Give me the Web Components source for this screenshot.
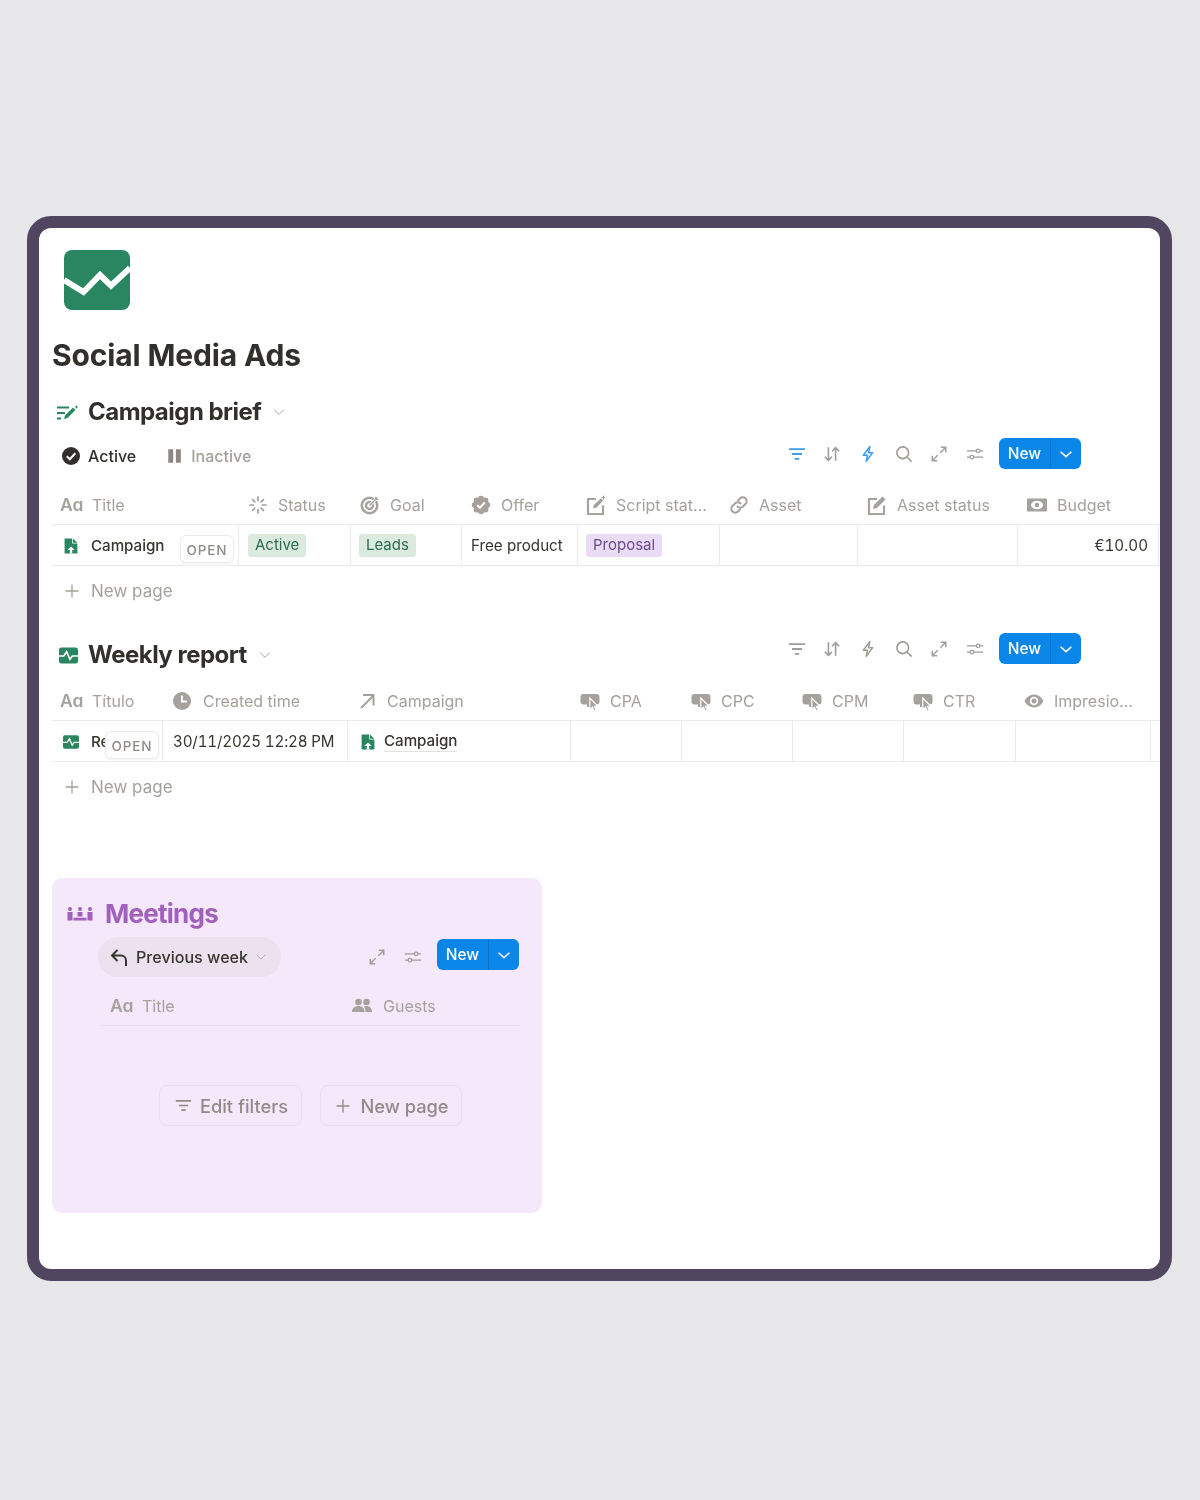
<!DOCTYPE html>
<html lang="en"><head><meta charset="utf-8"><title>Social Media Ads</title>
<style>
html,body{margin:0;padding:0;background:#e7e7e9}
body{font-family:Inter,"Liberation Sans",sans-serif;color:#37352f;-webkit-font-smoothing:antialiased}
.t1{--cols:187px 112px 111px 116px 142px 138px 160px 141px 2px}
.t2{--cols:111px 185px 223px 111px 111px 111px 112px 135px 20px}
.m{--cols:242px 176px}
</style></head><body>
<app-frame>
  <page-head title="Social Media Ads"></page-head>

  <view-title icon="brief" style="--top:23px">Campaign brief</view-title>
  <view-bar tabs bluefilter style="--top:12px"></view-bar>
  <t-row head class="t1" style="margin-top:16px">
    <t-head icon="aa" first>Title</t-head><t-head icon="spinner">Status</t-head><t-head icon="target">Goal</t-head><t-head icon="badge">Offer</t-head><t-head icon="edit" style="--pad:8px">Script stat...</t-head><t-head icon="link">Asset</t-head><t-head icon="edit2">Asset status</t-head><t-head icon="money">Budget</t-head><t-head></t-head>
  </t-row>
  <t-row class="t1">
    <t-cell first><x-icon name="doc" size="16" style="margin-right:12px"></x-icon><b-text>Campaign</b-text><open-badge style="left:128px;top:10px"></open-badge></t-cell>
    <t-cell><tag-pill tone="green">Active</tag-pill></t-cell>
    <t-cell><tag-pill tone="green" style="margin-left:-1px">Leads</tag-pill></t-cell>
    <t-cell>Free product</t-cell>
    <t-cell><tag-pill tone="purple" style="margin-left:-1px">Proposal</tag-pill></t-cell>
    <t-cell></t-cell><t-cell></t-cell>
    <t-cell end><n-text>€10.00</n-text></t-cell><t-cell none></t-cell>
  </t-row>
  <new-row></new-row>

  <view-title icon="pulse" style="--top:25px">Weekly report</view-title>
  <view-bar style="--top:-36px"></view-bar>
  <t-row head class="t2" style="margin-top:17px">
    <t-head icon="aa" first>Título</t-head><t-head icon="clock" style="--gap:11px">Created time</t-head><t-head icon="ne">Campaign</t-head><t-head icon="hand">CPA</t-head><t-head icon="hand">CPC</t-head><t-head icon="hand">CPM</t-head><t-head icon="hand">CTR</t-head><t-head icon="eye" style="--pad:8px">Impresio...</t-head><t-head icon="clock" style="--pad:8px"></t-head>
  </t-row>
  <t-row class="t2">
    <t-cell first><x-icon name="pulse" size="16" style="margin-right:12px"></x-icon><b-text>Re</b-text><open-badge style="left:53px;top:10px"></open-badge></t-cell>
    <t-cell><n-text style="--ls:-.18px;margin-left:1px">30/11/2025 12:28 PM</n-text></t-cell>
    <t-cell><x-icon name="doc" size="16" style="margin:0 8px 0 3px"></x-icon><b-text line>Campaign</b-text></t-cell>
    <t-cell></t-cell><t-cell></t-cell><t-cell></t-cell><t-cell></t-cell><t-cell></t-cell><t-cell none></t-cell>
  </t-row>
  <new-row></new-row>

  <meet-callout>
    <view-title icon="people" tone="purple">Meetings</view-title>
    <meet-bar></meet-bar>
    <t-row head class="m" style="margin:9px 23px 0 49px;--line:#ebdfef">
      <t-head icon="aa" first none style="--first:9px">Title</t-head><t-head icon="guests" none style="--gap:11px">Guests</t-head>
    </t-row>
    <empty-actions></empty-actions>
  </meet-callout>
</app-frame>

<script>
const I={
 filter:'<path d="M1 4.500h18M4.500 10h11M7.500 15.500h5" fill="none" stroke="currentColor" stroke-width="2"/>',
 sort:'<path d="M6 2.500V17M2 13l4 4 4-4M14 17.500V3M10 7l4-4 4 4" fill="none" stroke="currentColor" stroke-width="1.800"/>',
 bolt:'<path d="M12 1.800 4.800 11.300h4.700L8 18.200l7.200-9.700h-4.600z" fill="none" stroke="currentColor" stroke-width="1.700" stroke-linejoin="round"/>',
 search:'<circle cx="8.600" cy="8.600" r="6.500" fill="none" stroke="currentColor" stroke-width="1.800"/><path d="m13.300 13.300 5.200 5.200" stroke="currentColor" stroke-width="1.800"/>',
 expand:'<path d="M11.500 8.500 17.500 2.500M12 2.500h5.500V8M8.500 11.500l-6 6M2.500 12v5.500H8" fill="none" stroke="currentColor" stroke-width="1.600"/>',
 settings:'<path d="M1 6.500h10.500M15.500 6.500H19M1 13.500h3.500M8.500 13.500H19" stroke="currentColor" stroke-width="1.400"/><circle cx="13.500" cy="6.500" r="2" fill="none" stroke="currentColor" stroke-width="1.400"/><circle cx="6.500" cy="13.500" r="2" fill="none" stroke="currentColor" stroke-width="1.400"/>',
 chev:'<path d="m4 7.500 6 5.500 6-5.500" fill="none" stroke="currentColor" stroke-width="1.800"/>',
 chevthin:'<path d="m4 7 6 6 6-6" fill="none" stroke="currentColor" stroke-width="1.200"/>',
 plus:'<path d="M10 2v16M2 10h16" stroke="currentColor" stroke-width="1.700"/>',
 spinner:'<path d="M10 2v3.500M10 14.500V18M2 10h3.500M14.500 10H18M4.600 4.600l2.200 2.200M13.200 13.200l2.200 2.200M4.600 15.400l2.200-2.200M13.200 6.800l2.200-2.200" stroke="currentColor" stroke-width="1.700" stroke-linecap="round"/>',
 target:'<circle cx="9.500" cy="10.500" r="9" fill="currentColor"/><circle cx="9.500" cy="10.500" r="6.500" fill="#fff"/><circle cx="9.500" cy="10.500" r="4.700" fill="currentColor"/><circle cx="9.500" cy="10.500" r="2.300" fill="#fff"/><path d="m9.500 10.500 7.500-7.500" stroke="#fff" stroke-width="3"/><path d="m9.500 10.500 7-7" stroke="currentColor" stroke-width="1.400"/><path d="m15.500 1.200 3.300 3.300-2.600.4-1.200-1.100z" fill="currentColor"/>',
 badge:'<g fill="currentColor"><circle cx="10" cy="10" r="7.500"/><circle cx="10" cy="3.800" r="3"/><circle cx="10" cy="16.200" r="3"/><circle cx="3.800" cy="10" r="3"/><circle cx="16.200" cy="10" r="3"/><circle cx="5.600" cy="5.600" r="3"/><circle cx="14.400" cy="5.600" r="3"/><circle cx="5.600" cy="14.400" r="3"/><circle cx="14.400" cy="14.400" r="3"/></g><path d="m6.300 10.200 2.600 2.600 4.800-5.300" fill="none" stroke="#fff" stroke-width="2"/>',
 edit:'<path d="M10 4H2v15h15v-8.500" fill="none" stroke="currentColor" stroke-width="2.200"/><path d="m7 13.500.8-3.500L15 3.300l2.200 2.200-6.700 7z" fill="currentColor"/><path d="m17.500 0 .7 1.800 1.800.7-1.800.7-.7 1.800-.7-1.800-1.800-.7 1.800-.7z" fill="currentColor"/>',
 edit2:'<path d="M10 4H2v15h15v-8.500" fill="none" stroke="currentColor" stroke-width="2.200"/><path d="m6 14 .8-4L15.500 1.500l3 3-8.500 8.500z" fill="currentColor"/>',
 link:'<g fill="none" stroke="currentColor" stroke-width="2" stroke-linecap="round"><path d="M9 5.500 11 3.500a3.800 3.800 0 0 1 5.500 5.500l-2.500 2.500a3.800 3.800 0 0 1-5.500 0"/><path d="M11 14.500 9 16.500A3.800 3.800 0 0 1 3.500 11L6 8.500a3.800 3.800 0 0 1 5.500 0"/></g>',
 money:'<rect x="0" y="3.500" width="20" height="13" rx="1" fill="currentColor"/><ellipse cx="10" cy="10" rx="6" ry="4.300" fill="#fff"/><circle cx="10" cy="10" r="2.200" fill="currentColor"/>',
 clock:'<circle cx="10" cy="10" r="9" fill="currentColor"/><path d="M10 4.500V10.500h5" fill="none" stroke="#fff" stroke-width="2"/>',
 ne:'<path d="M4 17 16 5M6 4h10.500v10.500" fill="none" stroke="currentColor" stroke-width="2"/>',
 hand:'<rect x=".5" y="3" width="19" height="10.500" rx="3" fill="currentColor"/><path d="M7 13h5v3H7z" fill="currentColor"/><path d="M9.800 7v11.800l2.700-2.600 1.800 4 2-.9-1.800-3.900 3.500-.1z" fill="currentColor" stroke="#fff" stroke-width="1.200"/>',
 eye:'<path d="M10 3.500c5 0 8.300 4 9.500 6.500-1.200 2.500-4.500 6.500-9.500 6.500S1.700 12.500.5 10C1.700 7.500 5 3.500 10 3.500z" fill="currentColor"/><circle cx="10" cy="10" r="4.300" fill="#fff"/><circle cx="10" cy="10" r="2.500" fill="currentColor"/>',
 guests:'<g fill="currentColor"><circle cx="6.500" cy="6" r="3.300"/><circle cx="14.500" cy="6" r="3.300"/><path d="M0 16c0-3.500 2.500-6 6.500-6s6 2.500 6 6zM13.500 16c0-2.300-.6-4.200-1.800-5.500.8-.4 1.700-.6 2.800-.6 3.500 0 5.500 2.300 5.500 6.100z"/></g>',
 back:'<path d="M8.500 3 3 8.500 8.500 14M3 8.500h9a5 5 0 0 1 5 5V19" fill="none" stroke="currentColor" stroke-width="2"/>',
 check:'<circle cx="10" cy="10" r="9" fill="currentColor"/><path d="m5.800 10.300 3 3 5.500-6" fill="none" stroke="#fff" stroke-width="2"/>',
 pause:'<path d="M2.500 2.500h5.500v15H2.500zM11 2.500h5.500v15H11z" fill="currentColor"/>',
 doc:'<path d="M2 .5h9.500V7H18v12.500H2z" fill="currentColor"/><path d="M12.500 .5 18 6h-5.500z" fill="currentColor"/><path d="M10 10.500 5.500 15h3v4.500h3V15h3z" fill="#fff"/>',
 pulse:'<rect x="0" y="1.500" width="20" height="17" rx="2.500" fill="currentColor"/><path d="M0 10.500h5L8 6l3.500 8 2.500-3.500h6" fill="none" stroke="#fff" stroke-width="1.700"/>',
 brief:'<path d="M0 3.500h12M0 9h8M0 14.500h4" stroke="currentColor" stroke-width="2"/><path d="m7 15 1-3.500 8-8 2.500 2.500-8 8z" fill="currentColor"/><path d="m19.500 1 .6 1.400 1.400.6-1.400.6-.6 1.400-.6-1.400-1.400-.6 1.400-.6z" fill="currentColor"/>',
 people:'<g fill="currentColor"><circle cx="3" cy="2" r="2"/><circle cx="13" cy="2" r="2"/><circle cx="23" cy="2" r="2"/><path d="M.5 5h5v8.500h-5zM20.500 5h5v8.500h-5zM10.500 5h5v4.500h-5zM6.500 10.700h13v2.800h-13z"/></g>'
};
const VB={brief:'0 0 22 16',people:'0 0 26 14'};
function def(name,css,html){
  customElements.define(name,class extends HTMLElement{
    constructor(){super();this.attachShadow({mode:'open'});}
    connectedCallback(){ if(!this._s){this._s=1;this.shadowRoot.innerHTML='<style>'+css+'</style>'+(typeof html==='function'?html(this):html);} }
  });
}
customElements.define('x-icon',class extends HTMLElement{
  constructor(){super();this.attachShadow({mode:'open'});}
  connectedCallback(){
    const n=this.getAttribute('name'),s=this.getAttribute('size')||20,h=this.getAttribute('h')||s;
    this.shadowRoot.innerHTML=`<style>:host{display:inline-flex;flex:none;width:${s}px;height:${h}px}svg{display:block;width:100%;height:100%}</style><svg viewBox="${VB[n]||'0 0 20 20'}" aria-hidden="true">${I[n]||''}</svg>`;
  }
});
def('app-frame',`:host{display:block;box-sizing:border-box;margin:216px 0 0 27px;width:1145px;height:1065px;border:12px solid #50465f;border-radius:24px;background:#fff;overflow:hidden;padding-left:13px;color:#37352f;filter:blur(.35px)}`,'<slot></slot>');
def('page-head',`:host{display:block;padding-top:22px}
 svg{display:block;margin-left:12px;width:66px;height:60px}
 h1{margin:25px 0 0;font:700 30px/40px Inter,sans-serif;letter-spacing:-.15px;color:#32302c}`,
 e=>`<svg viewBox="0 0 66 60" aria-hidden="true"><rect width="66" height="60" rx="8" fill="#2a8661"/><path d="M0 30 19.500 42 36 25 47 35.700 66 18" fill="none" stroke="#fff" stroke-width="6"/></svg><h1>${e.getAttribute('title')}</h1>`);
def('view-title',`:host{display:flex;align-items:center;height:28px;margin-top:var(--top,0);font:700 24px/28px Inter,sans-serif;letter-spacing:-.52px;color:#32302c;padding-left:5px}
 x-icon{color:#2a8661;margin-right:9px}
 :host([tone=purple]){color:#a260bd;font-size:26px;padding-left:15px;letter-spacing:-.75px}
 :host([tone=purple]) x-icon{color:#a260bd;margin-right:12px}
 :host([icon=pulse]) x-icon{margin:0 10px 0 2px}`,
 e=>{const i=e.getAttribute('icon');const a=i==='brief'?'size="22" h="16"':i==='people'?'size="26" h="14"':'size="19"';
 return `<x-icon name="${i}" ${a}></x-icon><span><slot></slot></span>${e.getAttribute('tone')?'':'<x-icon name="chevthin" size="16" style="color:#a5a19c;margin:0 0 0 10px"></x-icon>'}`;});
def('new-btn',`:host{display:inline-flex;box-sizing:border-box;width:82px;height:31px;background:#0a85e8;border-radius:6px;color:#fff;font:500 15.500px/31px Inter,sans-serif;flex:none}
 .a{width:51px;text-align:center;border-right:1px solid #0873c9}.b{flex:1;display:flex;align-items:center;justify-content:center}`,
 `<div class="a">New</div><div class="b"><x-icon name="chev" size="18"></x-icon></div>`);
def('view-bar',`:host{display:flex;align-items:center;height:31px;margin-top:var(--top,0);padding-right:79px;font:500 16px/20px Inter,sans-serif;position:relative}
 .tab{display:flex;align-items:center;position:relative;top:2px}
 .tabs{display:flex;padding-left:9px;gap:30px}
 .icons{display:flex;margin-left:auto;gap:17.700px;color:#a09c97;margin-right:15px}
 .on{color:#32302c}.off{color:#a5a19c}
 .blue{color:#3b9cf0}`,
 e=>{const t=e.hasAttribute('tabs'),b=e.hasAttribute('bluefilter')?'blue':'';
 return `${t?`<div class="tabs"><div class="tab on"><x-icon name="check" size="20" style="margin-right:7px"></x-icon>Active</div><div class="tab off"><x-icon name="pause" size="18" style="margin-right:7px;color:#8d8883"></x-icon>Inactive</div></div>`:''}
 <div class="icons"><x-icon class="${b}" name="filter" size="18"></x-icon><x-icon name="sort" size="18"></x-icon><x-icon class="${b}" name="bolt" size="18"></x-icon><x-icon name="search" size="18"></x-icon><x-icon name="expand" size="18"></x-icon><x-icon name="settings" size="18"></x-icon></div><new-btn></new-btn>`;});
def('t-row',`:host{display:grid;grid-template-columns:var(--cols);height:41px;box-sizing:border-box;border-bottom:1px solid var(--line,#ebebea)}
 :host([head]){height:40px}`,'<slot></slot>');
def('t-head',`:host{display:flex;align-items:center;min-width:0;overflow:hidden;white-space:nowrap;padding-left:var(--pad,9px);font:400 16px/20px Inter,sans-serif;color:#a5a19c}
 :host([first]){padding-left:var(--first,8px)}
 .aa{font:600 17.500px/20px Inter,sans-serif;width:22px;margin-right:10px;color:#a5a19c;letter-spacing:-.3px}
 x-icon{margin-right:var(--gap,10px);color:#a5a19c}`,
 e=>{const i=e.getAttribute('icon');
 return (i==='aa'?'<span class="aa">Aɑ</span>':i?`<x-icon name="${i}" size="20"></x-icon>`:'')+'<slot></slot>';});
def('t-cell',`:host{display:flex;align-items:center;box-sizing:border-box;position:relative;min-width:0;white-space:nowrap;padding:1px 10px 0 9px;border-right:1px solid #ebebea;font:400 15.200px/20px Inter,sans-serif;color:#37352f}
 :host([first]){padding-left:11px;overflow:hidden}
 ::slotted(x-icon){color:#2a8661}
 :host([end]){justify-content:flex-end}
 :host([none]){border-right:0}`,'<slot></slot>');
def('b-text',`:host{font-weight:500;letter-spacing:-.05px;color:#37352f}
 :host([line]){border-bottom:1px solid #e3e2e0;line-height:20px}`,'<slot></slot>');
def('n-text',`:host{font-variant-numeric:tabular-nums;letter-spacing:var(--ls,0)}`,'<slot></slot>');
def('open-badge',`:host{position:absolute;box-sizing:border-box;width:54px;height:28px;background:#fff;border:1px solid #ebebea;border-radius:6px;box-shadow:0 1px 2px rgba(0,0,0,.05);text-align:center;font:500 13.500px/28px Inter,sans-serif;letter-spacing:.9px;color:#8f8b86}`,'OPEN');
def('tag-pill',`:host{display:inline-block;height:23px;padding:0 7px;border-radius:3px;font:400 15px/22px Inter,sans-serif}
 :host([tone=green]){background:#dbeadf;color:#2e6a4e}
 :host([tone=purple]){background:#eadcf5;color:#6c4a8c}`,'<slot></slot>');
def('new-row',`:host{display:flex;align-items:center;height:50px;padding-left:12px;font:400 17px/20px Inter,sans-serif;color:#a5a19c}
 x-icon{margin-right:11px}`,`<x-icon name="plus" size="16"></x-icon>New page`);
def('meet-callout',`:host{display:block;box-sizing:border-box;width:490px;height:335px;margin-top:66px;background:#f5e8fb;border-radius:10px;padding-top:22px}`,'<slot></slot>');
def('meet-bar',`:host{display:flex;align-items:center;height:40px;margin:9px 23px 0 46px}
 .pill{display:flex;align-items:center;height:40px;width:183px;box-sizing:border-box;padding-left:11px;border-radius:20px;background:#ece1ee;font:500 16.100px/20px Inter,sans-serif;color:#37352f;white-space:nowrap}
 .icons{display:flex;gap:18px;margin-left:auto;margin-right:15px;color:#a09c97}
 new-btn{margin-top:-5px}`,
 `<div class="pill"><x-icon name="back" size="20" style="margin-right:7px"></x-icon>Previous week<x-icon name="chevthin" size="14" style="margin-left:6px;color:#a5a19c"></x-icon></div><div class="icons"><x-icon name="expand" size="18"></x-icon><x-icon name="settings" size="18"></x-icon></div><new-btn></new-btn>`);
def('empty-actions',`:host{display:flex;gap:18px;margin:59px 0 0 107px}
 .b{display:flex;align-items:center;justify-content:center;box-sizing:border-box;height:41px;padding-left:2px;border:1.500px solid #eadfee;border-radius:8px;font:500 18.300px/20px Inter,sans-serif;color:#8f8b86;white-space:nowrap}
 x-icon{margin-right:8px;color:#8f8b86}`,
 `<div class="b" style="width:143px"><x-icon name="filter" size="17"></x-icon>Edit filters</div><div class="b" style="width:142px"><x-icon name="plus" size="16" style="margin-right:9px"></x-icon>New page</div>`);
</script>
</body></html>
